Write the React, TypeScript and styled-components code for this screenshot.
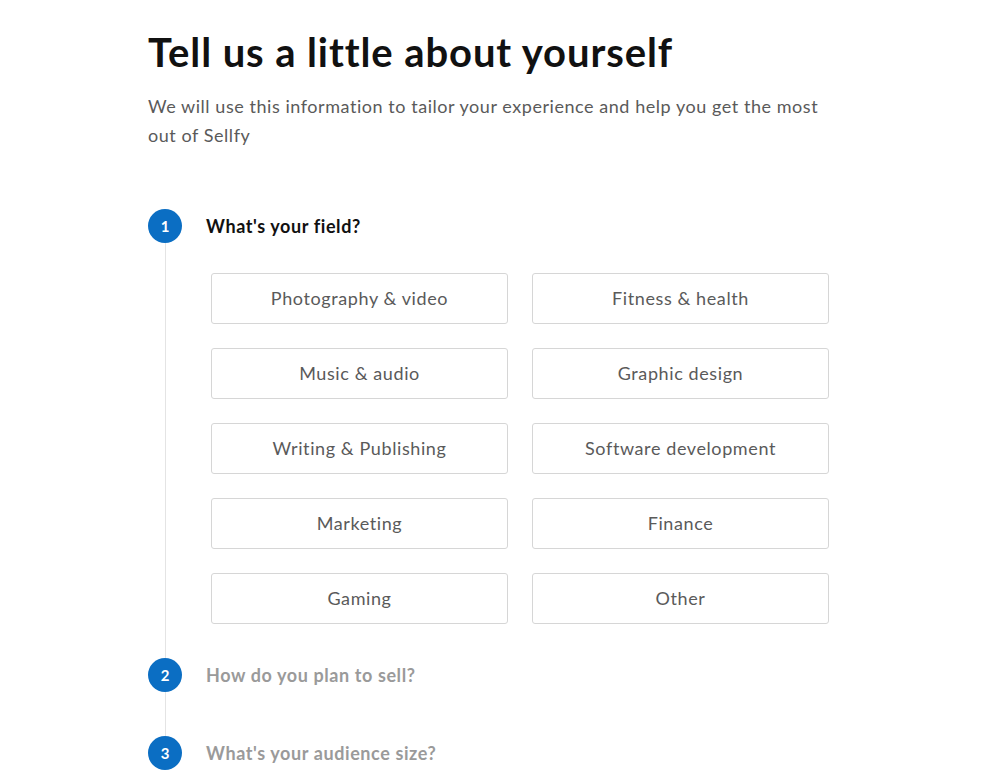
import { createGlobalStyle, styled } from "styled-components";

const GlobalStyle = createGlobalStyle`
  body {
    margin: 0;
    background: #fff;
    font-family: "Lato", "Liberation Sans", sans-serif;
  }
`;

const Page = styled.div`
  padding: 28px 0 0 148px;
  width: 681px;
`;

const Title = styled.h1`
  margin: 0;
  font-size: 40px;
  line-height: 48px;
  font-weight: 700;
  color: #111;
  letter-spacing: 0.9px;
`;

const Intro = styled.p`
  margin: 16px 0 0;
  font-size: 18px;
  line-height: 29px;
  color: #5a5a5a;
  letter-spacing: 0.55px;
`;

const Steps = styled.div`
  margin-top: 59px;
  display: flex;
  flex-direction: column;
`;

const Step = styled.div<{ $pad: number }>`
  display: grid;
  grid-template-columns: 34px 1fr;
  column-gap: 24px;
  padding-bottom: ${({ $pad }) => $pad}px;
  position: relative;
`;

const Rail = styled.div`
  display: flex;
  flex-direction: column;
  align-items: center;
`;

const Line = styled.div<{ $show: boolean }>`
  position: absolute;
  left: 16.5px;
  top: 34px;
  bottom: 0;
  width: 1px;
  background: ${({ $show }) => ($show ? "#e4e4e4" : "transparent")};
`;

const Circle = styled.div`
  width: 34px;
  height: 34px;
  border-radius: 50%;
  background: #0b6ec3;
  color: #fff;
  font-size: 15px;
  font-weight: 700;
  display: flex;
  align-items: center;
  justify-content: center;
`;

const Body = styled.div``;

const Label = styled.div<{ $active: boolean }>`
  height: 34px;
  line-height: 34px;
  font-size: 18px;
  font-weight: 700;
  letter-spacing: 0.6px;
  color: ${({ $active }) => ($active ? "#111" : "#9a9a9a")};
`;

const Options = styled.div`
  margin: 30px 0 0 5px;
  display: grid;
  grid-template-columns: 297px 297px;
  column-gap: 24px;
  row-gap: 24px;
`;

const Option = styled.button`
  height: 51px;
  border: 1px solid #d6d6d6;
  border-radius: 3px;
  background: #fff;
  font-family: inherit;
  font-size: 18px;
  letter-spacing: 0.6px;
  color: #5a5a5a;
  cursor: pointer;
  padding: 0 0 2px;
`;

const fields = [
  "Photography & video",
  "Fitness & health",
  "Music & audio",
  "Graphic design",
  "Writing & Publishing",
  "Software development",
  "Marketing",
  "Finance",
  "Gaming",
  "Other",
];

export default function App() {
  return (
    <>
      <GlobalStyle />
      <Page>
        <Title>Tell us a little about yourself</Title>
        <Intro>
          We will use this information to tailor your experience and help you get the most
          out of Sellfy
        </Intro>
        <Steps>
          <Step $pad={34}>
            <Rail>
              <Circle>1</Circle>
            </Rail>
            <Line $show />
            <Body>
              <Label $active>What's your field?</Label>
              <Options>
                {fields.map((f) => (
                  <Option key={f}>{f}</Option>
                ))}
              </Options>
            </Body>
          </Step>
          <Step $pad={44}>
            <Rail>
              <Circle>2</Circle>
            </Rail>
            <Line $show />
            <Body>
              <Label $active={false}>How do you plan to sell?</Label>
            </Body>
          </Step>
          <Step $pad={40}>
            <Rail>
              <Circle>3</Circle>
            </Rail>
            <Line $show={false} />
            <Body>
              <Label $active={false}>What's your audience size?</Label>
            </Body>
          </Step>
        </Steps>
      </Page>
    </>
  );
}
